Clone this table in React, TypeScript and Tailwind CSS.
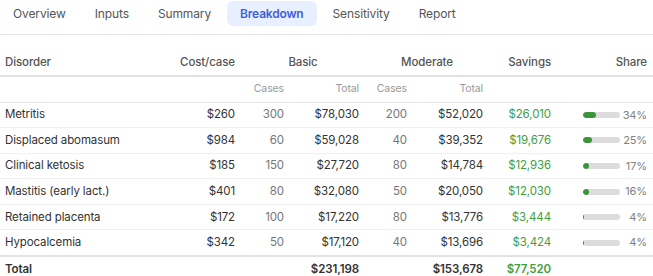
import { useState } from "react";

type Row = {
  name: string;
  cost: string;
  basicCases: string;
  basicTotal: string;
  modCases: string;
  modTotal: string;
  savings: string;
  share: number;
};

const rows: Row[] = [
  { name: "Metritis", cost: "$260", basicCases: "300", basicTotal: "$78,030", modCases: "200", modTotal: "$52,020", savings: "$26,010", share: 34 },
  { name: "Displaced abomasum", cost: "$984", basicCases: "60", basicTotal: "$59,028", modCases: "40", modTotal: "$39,352", savings: "$19,676", share: 25 },
  { name: "Clinical ketosis", cost: "$185", basicCases: "150", basicTotal: "$27,720", modCases: "80", modTotal: "$14,784", savings: "$12,936", share: 17 },
  { name: "Mastitis (early lact.)", cost: "$401", basicCases: "80", basicTotal: "$32,080", modCases: "50", modTotal: "$20,050", savings: "$12,030", share: 16 },
  { name: "Retained placenta", cost: "$172", basicCases: "100", basicTotal: "$17,220", modCases: "80", modTotal: "$13,776", savings: "$3,444", share: 4 },
  { name: "Hypocalcemia", cost: "$342", basicCases: "50", basicTotal: "$17,120", modCases: "40", modTotal: "$13,696", savings: "$3,424", share: 4 },
];

const tabs = ["Overview", "Inputs", "Summary", "Breakdown", "Sensitivity", "Report"];

export default function App() {
  const [active, setActive] = useState("Breakdown");

  return (
    <div className="w-[653px] h-[276px] overflow-hidden bg-white text-[#333] font-['Inter','Noto_Sans',sans-serif]">
      <div className="flex gap-[3px] pt-px pb-2 border-b border-[#e6e6e6]">
        {tabs.map((t) => (
          <button
            key={t}
            onClick={() => setActive(t)}
            className={
              active === t
                ? "h-[25px] px-[13px] rounded-md bg-[#e8efff] text-[#3d5fd6] text-[12px] tracking-[-0.015em] font-semibold"
                : "h-[25px] px-[13px] rounded-md text-[#555] text-[12px] tracking-[-0.01em]"
            }
          >
            {t}
          </button>
        ))}
      </div>

      <table className="mt-4 w-full table-fixed border-collapse text-[11.5px] tracking-[-0.01em]">
        <colgroup>
          <col className="w-[160px]" />
          <col className="w-[81px]" />
          <col className="w-[49px]" />
          <col className="w-[75px]" />
          <col className="w-[48px]" />
          <col className="w-[76px]" />
          <col className="w-[68px]" />
          <col />
        </colgroup>
        <thead>
          <tr className="border-b-2 border-[#e2e2e2] text-[#555]">
            <th className="h-[25px] px-[5px] text-left font-medium">Disorder</th>
            <th className="px-[6px] text-right font-medium">Cost/case</th>
            <th colSpan={2} className="px-[6px] text-center font-medium">Basic</th>
            <th colSpan={2} className="px-[6px] text-center font-medium">Moderate</th>
            <th className="px-[6px] text-right font-medium">Savings</th>
            <th className="px-[6px] text-right font-medium">Share</th>
          </tr>
          <tr className="border-b border-[#e6e6e6] text-[10.5px] text-[#999]">
            <th className="h-[26px]" />
            <th />
            <th className="px-[6px] text-right font-normal">Cases</th>
            <th className="px-[6px] text-right font-normal">Total</th>
            <th className="px-[6px] text-right font-normal">Cases</th>
            <th className="px-[6px] text-right font-normal">Total</th>
            <th />
            <th />
          </tr>
        </thead>
        <tbody>
          {rows.map((r, i) => (
            <tr
              key={r.name}
              className={i === rows.length - 1 ? "border-b-2 border-[#e2e2e2]" : "border-b border-[#f0f0f0]"}
            >
              <td className="h-[25.6px] px-[5px] text-left">{r.name}</td>
              <td className="px-[6px] text-right">{r.cost}</td>
              <td className="px-[6px] text-right text-[#777]">{r.basicCases}</td>
              <td className="px-[6px] text-right">{r.basicTotal}</td>
              <td className="px-[6px] text-right text-[#777]">{r.modCases}</td>
              <td className="px-[6px] text-right">{r.modTotal}</td>
              <td className="px-[6px] text-right text-[#3f9e3f]">{r.savings}</td>
              <td className="px-[6px]">
                <div className="flex items-center justify-end">
                  <div className="w-[37px] h-[6px] rounded-full bg-[#dcdcdc] overflow-hidden">
                    <div className="h-full rounded-full bg-[#3a943a]" style={{ width: `${r.share}%` }} />
                  </div>
                  <span className="w-[27px] text-right text-[#808080] text-[11px]">{r.share}%</span>
                </div>
              </td>
            </tr>
          ))}
          <tr className="font-semibold">
            <td className="h-[27px] px-[5px] text-left">Total</td>
            <td />
            <td />
            <td className="px-[6px] text-right">$231,198</td>
            <td />
            <td className="px-[6px] text-right">$153,678</td>
            <td className="px-[6px] text-right text-[#3f9e3f]">$77,520</td>
            <td />
          </tr>
        </tbody>
      </table>
    </div>
  );
}
